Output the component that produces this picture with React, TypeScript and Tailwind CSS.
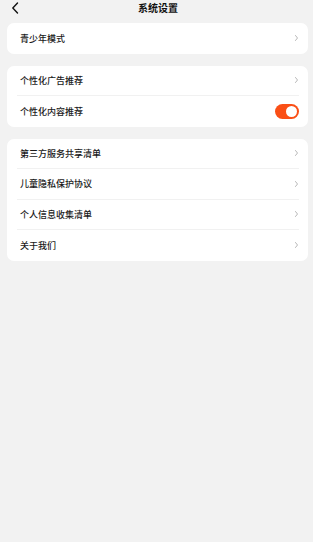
import React, { useState } from 'react'

const font = { fontFamily: '"Noto Sans CJK SC", "Noto Sans", sans-serif' }

function Chevron() {
  return (
    <svg width="5" height="8" viewBox="0 0 5 8" className="shrink-0">
      <path d="M1.5 1.5l2 2.5-2 2.5" fill="none" stroke="#b8b8b8" strokeWidth="1" strokeLinecap="round" strokeLinejoin="round" />
    </svg>
  )
}

function Toggle({ on, onClick }: { on: boolean; onClick: () => void }) {
  return (
    <button
      onClick={onClick}
      className={`w-[24px] h-[15px] rounded-full flex items-center px-[2px] ${on ? 'bg-[#fa4f16] justify-end' : 'bg-[#d9d9d9] justify-start'}`}
    >
      <span className="w-[11px] h-[11px] rounded-full bg-white block" />
    </button>
  )
}

function Row({ label, last, right }: { label: string; last?: boolean; right?: React.ReactNode }) {
  return (
    <div className={`h-[30.5px] ml-[10px] mr-[9px] flex items-center justify-between ${last ? '' : 'border-b border-[#f1f1f1]'}`}>
      <span className="pl-[3px] text-[9px] font-medium text-[#1a1a1a] leading-none">{label}</span>
      <div className="flex items-center">{right ?? <Chevron />}</div>
    </div>
  )
}

export default function App() {
  const [on, setOn] = useState(true)
  return (
    <div className="w-[313px] h-[542px] bg-[#f2f2f2] flex flex-col" style={font}>
      <div className="h-[16px] relative flex items-center justify-center">
        <svg width="8" height="12" viewBox="0 0 8 12" className="absolute left-[11px] top-[2px]">
          <path d="M6.5 1L1.8 6l4.7 5" fill="none" stroke="#111" strokeWidth="1.4" strokeLinecap="round" strokeLinejoin="round" />
        </svg>
        <span className="text-[10px] font-bold text-[#111] leading-none mt-[-1px] ml-[3px]">系统设置</span>
      </div>
      <div className="pl-[7px] pr-[5px] pt-[7px] flex flex-col gap-[12px]">
        <div className="bg-white rounded-[7px]">
          <Row label="青少年模式" last />
        </div>
        <div className="bg-white rounded-[7px]">
          <Row label="个性化广告推荐" />
          <Row label="个性化内容推荐" last right={<Toggle on={on} onClick={() => setOn(!on)} />} />
        </div>
        <div className="bg-white rounded-[7px]">
          <Row label="第三方服务共享清单" />
          <Row label="儿童隐私保护协议" />
          <Row label="个人信息收集清单" />
          <Row label="关于我们" last />
        </div>
      </div>
    </div>
  )
}
